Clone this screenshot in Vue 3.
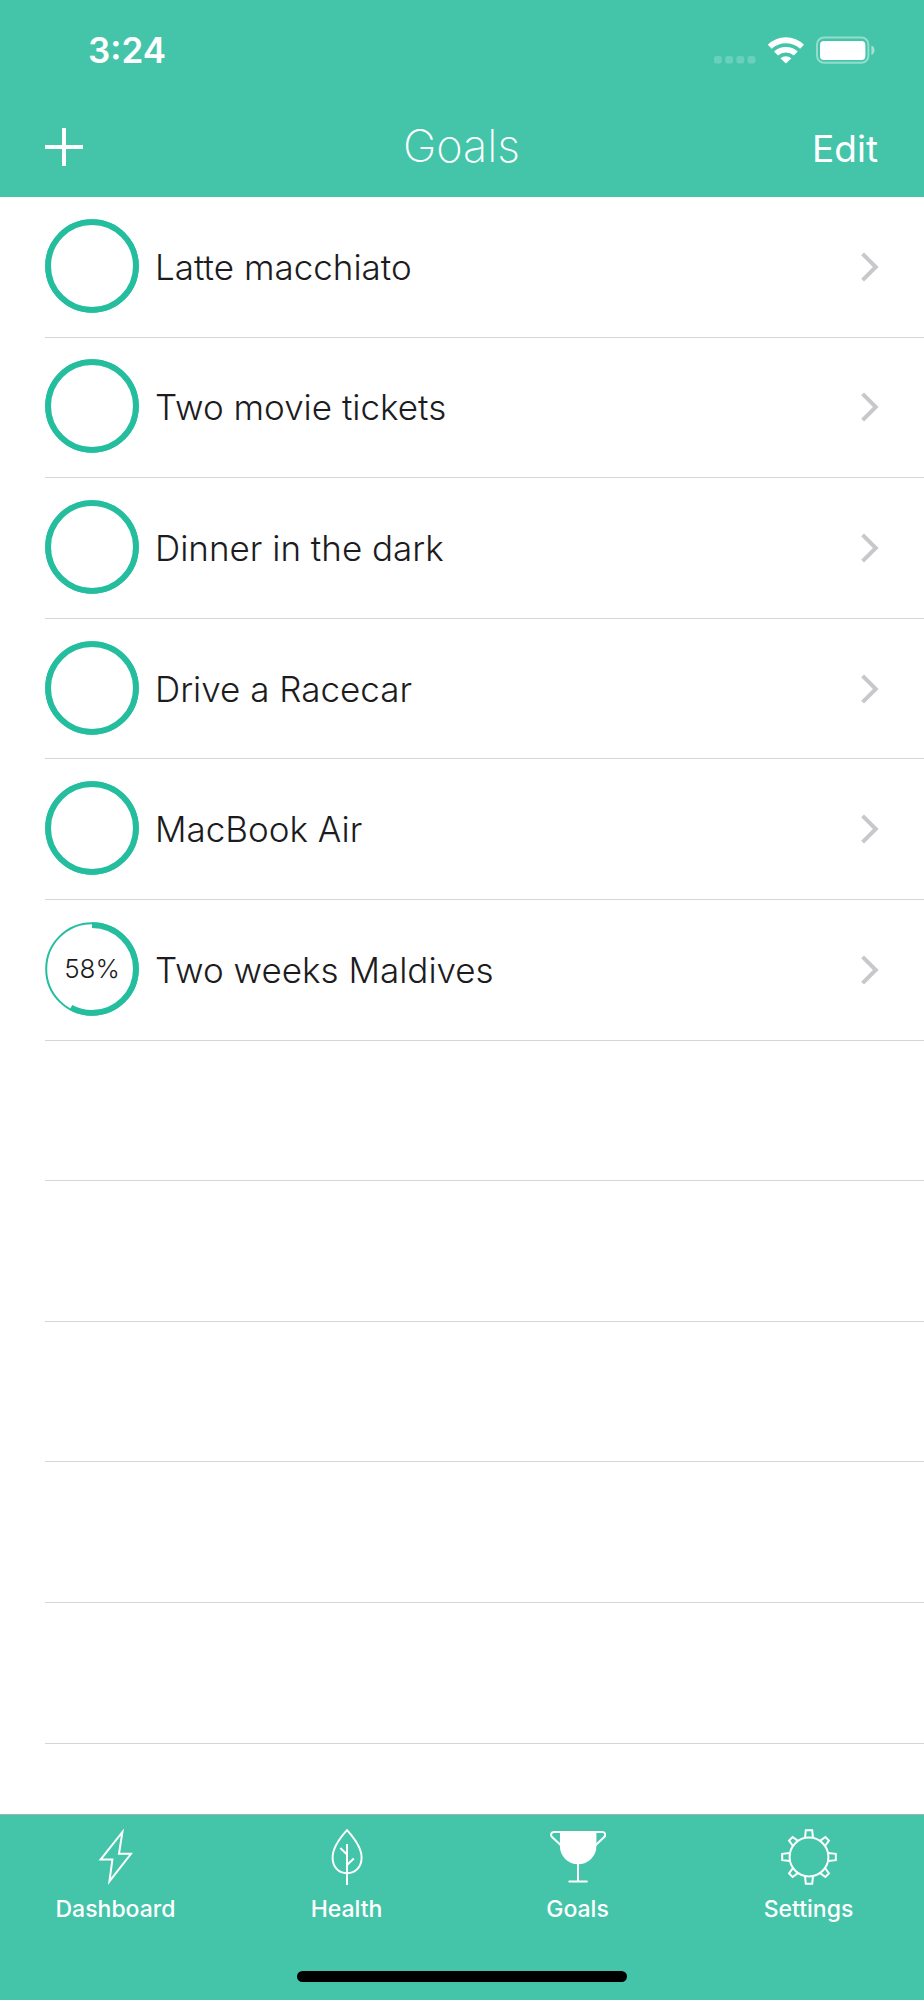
<script setup>
import { ref } from 'vue'

const goals = [
  { name: 'Latte macchiato', percent: 100 },
  { name: 'Two movie tickets', percent: 100 },
  { name: 'Dinner in the dark', percent: 100 },
  { name: 'Drive a Racecar', percent: 100 },
  { name: 'MacBook Air', percent: 100 },
  { name: 'Two weeks Maldives', percent: 58 }
]
const emptyRows = 5
const tabs = ['Dashboard', 'Health', 'Goals', 'Settings']
const active = ref('Goals')
</script>

<template>
  <div class="screen">
    <header class="top">
      <div class="status">
        <span class="time">3:24</span>
        <div class="indicators">
          <svg class="signal" width="42" height="28" viewBox="0 0 42 28" aria-hidden="true">
            <rect v-for="i in 4" :key="i" :x="(i - 1) * 11.2" y="20" width="7.8" height="7.6" rx="2.5" />
          </svg>
          <svg width="38" height="28" viewBox="0 0 38 28" fill="#fff" aria-hidden="true">
            <path d="M.8 8.7A26 26 0 0 1 37 8.7L33.1 12.7A21 21 0 0 0 4.7 12.7Z" />
            <path d="M7 15.4A18 18 0 0 1 30.8 15.4L26.8 19.4A12 12 0 0 0 11 19.4Z" />
            <path d="M13.4 22.2A8.6 8.6 0 0 1 24.4 22.2L18.9 27.6Z" />
          </svg>
          <svg width="60" height="28" viewBox="0 0 60 28" aria-hidden="true">
            <rect x="1" y="1.4" width="51.4" height="25.4" rx="7" fill="none" stroke="#fff" stroke-opacity=".42" stroke-width="2" />
            <rect x="4" y="5" width="45.4" height="19" rx="4" fill="#fff" />
            <path d="M55.4 9.6C59.6 11 59.6 17.6 55.4 19Z" fill="#fff" fill-opacity=".5" />
          </svg>
        </div>
      </div>
      <div class="navbar">
        <button class="add" type="button" aria-label="Add goal">
          <svg width="38" height="38" viewBox="0 0 38 38" aria-hidden="true">
            <path d="M19 0V38M0 19H38" stroke="#fff" stroke-width="4" />
          </svg>
        </button>
        <h1>Goals</h1>
        <button class="edit" type="button">Edit</button>
      </div>
    </header>

    <main class="list">
      <a v-for="g in goals" :key="g.name" class="row" href="#">
        <span class="ring">
          <svg width="94" height="94" viewBox="0 0 94 94" aria-hidden="true">
            <circle cx="47" cy="47" r="45.8" stroke-width="2" />
            <circle
              cx="47" cy="47" r="43.9" stroke-width="5.8" pathLength="100"
              :stroke-dasharray="g.percent + ' 100'" transform="rotate(-90 47 47)"
            />
          </svg>
          <span v-if="g.percent < 100" class="percent">{{ g.percent }}%</span>
        </span>
        <span class="name">{{ g.name }}</span>
        <svg class="chevron" width="18" height="30" viewBox="0 0 18 30" aria-hidden="true">
          <path d="M1.6 1.9L14.8 15L1.6 28.1" />
        </svg>
      </a>
      <div v-for="n in emptyRows" :key="n" class="row"></div>
    </main>

    <footer class="bottom">
      <nav class="tabs">
        <button
          v-for="t in tabs" :key="t" type="button" class="tab"
          :aria-current="active === t ? 'page' : undefined" @click="active = t"
        >
          <svg width="56" height="56" viewBox="0 0 56 56" aria-hidden="true">
            <path v-if="t === 'Dashboard'" d="M34.4 3L12.6 30.6H24.4L21.4 52.4L43 24.8H31Z" />
            <g v-else-if="t === 'Health'">
              <path d="M28 1.2C20 10 13.6 19.5 13.6 28.5C13.6 38 19.5 44.2 28 44.2C36.5 44.2 42.6 38 42.6 28.5C42.6 19.5 36 10 28 1.2Z" />
              <path d="M28 15V56M21.3 19L28 25.5M34.8 29.5L28 36" />
            </g>
            <g v-else-if="t === 'Goals'">
              <path d="M11 3H45.4V17A17.2 17.2 0 0 1 10.9 17Z" fill="#fff" />
              <path d="M11 3H4.5C.8 3 .2 6 2.3 8.3L12 17.3M45 3H51.9C55.6 3 56.2 6 54 8.3L44.4 17.3M28 34V52.4M19.3 52.4H36.8" stroke-linecap="round" />
            </g>
            <g v-else>
              <circle cx="28" cy="28" r="19.4" />
              <path
                v-for="a in [0, 90, 180, 270]" :key="a" :transform="`rotate(${a} 28 28)`"
                d="M24 9.2L24.8 1.2H31.2L32 9.2"
              />
              <path
                v-for="a in [45, 135, 225, 315]" :key="a" :transform="`rotate(${a} 28 28)`"
                d="M24.4 9.2L25.5 2.3H30.5L31.6 9.2"
              />
            </g>
          </svg>
          <span>{{ t }}</span>
        </button>
      </nav>
      <div class="home"></div>
    </footer>
  </div>
</template>

<style>
body {
  margin: 0;
  background: #fff;
}
</style>

<style scoped>
.screen {
  display: flex;
  flex-direction: column;
  min-height: 100vh;
  font-family: Inter, "Liberation Sans", sans-serif;
  color: #1c1c1e;
}
button {
  padding: 0;
  border: 0;
  background: none;
  color: #fff;
  font: inherit;
  cursor: pointer;
}
svg {
  display: block;
}
.top {
  background: #44c5aa;
  color: #fff;
}
.status {
  display: flex;
  align-items: center;
  justify-content: space-between;
  height: 100px;
  padding: 0 48px 0 88px;
  box-sizing: border-box;
}
.time {
  font-size: 35px;
  font-weight: 600;
  line-height: 44px;
}
.indicators {
  display: flex;
  gap: 11px;
}
.signal {
  fill: #fff;
  fill-opacity: 0.2;
}
.navbar {
  display: grid;
  grid-template-columns: 1fr auto 1fr;
  align-items: center;
  height: 97px;
  padding: 0 46px 0 45px;
  box-sizing: border-box;
}
.add {
  justify-self: start;
  padding-bottom: 4px;
}
.edit {
  justify-self: end;
  font-size: 37px;
  line-height: 48px;
}
h1 {
  margin: 0;
  padding-bottom: 6px;
  font-size: 45px;
  font-weight: 250;
  line-height: 56px;
}
.list {
  flex: 1;
  display: grid;
  /* eleven full rows, then half of the next one above the tab bar */
  grid-template-rows: repeat(11, 2fr) 1fr;
}
.row {
  display: flex;
  align-items: center;
  margin-left: 45px;
  padding-right: 45px;
  border-bottom: 1px solid #d6d6d8;
  color: inherit;
  text-decoration: none;
}
.ring {
  display: grid;
  place-items: center;
  margin: 0 16px 2px 0;
}
.ring > * {
  grid-area: 1 / 1;
}
.ring circle {
  fill: none;
  stroke: #24be9e;
}
.percent {
  font-size: 26px;
  font-weight: 300;
}
.name {
  flex: 1;
  font-size: 35px;
  font-weight: 300;
  line-height: 48px;
}
.chevron path {
  fill: none;
  stroke: #c7c7cc;
  stroke-width: 4;
}
.bottom {
  background: #44c5aa;
  border-top: 1px solid #98b8b1;
}
.tabs {
  display: grid;
  grid-template-columns: repeat(4, 1fr);
  padding-top: 14px;
}
.tab {
  display: flex;
  flex-direction: column;
  align-items: center;
  gap: 10px;
  font-size: 23px;
  font-weight: 500;
  line-height: 28px;
}
.tab svg {
  fill: none;
  stroke: #fff;
  stroke-width: 2;
}
.home {
  width: 330px;
  height: 11px;
  margin: 48px auto 18px;
  border-radius: 6px;
  background: #000;
}
</style>
